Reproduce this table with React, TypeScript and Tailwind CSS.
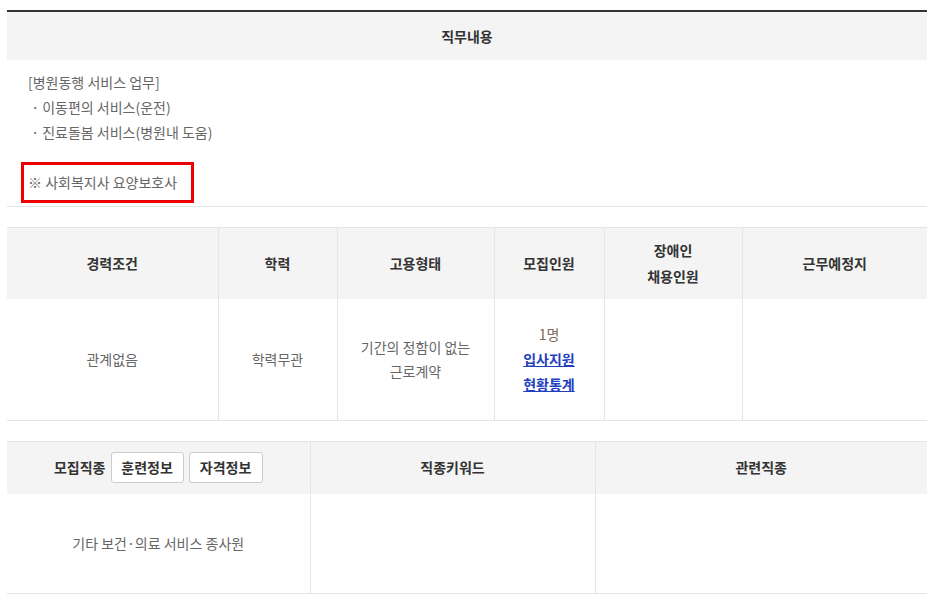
import React from "react";

const font = { fontFamily: '"Noto Sans CJK KR", "Noto Sans", sans-serif' };

export default function App() {
  return (
    <div className="bg-white w-[933px] h-[613px] pt-[10px] px-[7px] text-[14px]" style={font}>
      {/* 직무내용 */}
      <section className="w-[920px] border-t-2 border-[#333333] border-b border-b-[#e5e5e5]">
        <div className="h-[48px] bg-[#f4f4f4] flex items-center justify-center font-bold text-[#333333]">직무내용</div>
        <div className="pt-[10px] pb-[3px] text-[#666666] leading-[25px]">
          <p className="pl-[21px]">[병원동행 서비스 업무]</p>
          <p className="pl-[21px]">&nbsp;· 이동편의 서비스(운전)</p>
          <p className="pl-[21px]">&nbsp;· 진료돌봄 서비스(병원내 도움)</p>
          <div className="ml-[14px] mt-[17px] w-[173px] h-[41px] border-[3px] border-[#ee0000] flex items-center pl-[4px]">
            ※ 사회복지사 요양보호사
          </div>
        </div>
      </section>

      {/* 조건 표 */}
      <table className="mt-[20px] w-[920px] border-collapse table-fixed border-t border-b border-[#e5e5e5]">
        <colgroup>
          <col className="w-[211px]" />
          <col className="w-[119px]" />
          <col className="w-[157px]" />
          <col className="w-[110px]" />
          <col className="w-[138px]" />
          <col className="w-[185px]" />
        </colgroup>
        <thead>
          <tr className="h-[71px] bg-[#f4f4f4] text-[#333333] font-bold leading-[26px]">
            <th className="border-r border-[#e5e5e5]">경력조건</th>
            <th className="border-r border-[#e5e5e5]">학력</th>
            <th className="border-r border-[#e5e5e5]">고용형태</th>
            <th className="border-r border-[#e5e5e5]">모집인원</th>
            <th className="border-r border-[#e5e5e5]">장애인<br />채용인원</th>
            <th>근무예정지</th>
          </tr>
        </thead>
        <tbody>
          <tr className="h-[122px] text-[#666666] text-center leading-[24px]">
            <td className="border-r border-[#e5e5e5]">관계없음</td>
            <td className="border-r border-[#e5e5e5]">학력무관</td>
            <td className="border-r border-[#e5e5e5]">기간의 정함이 없는<br />근로계약</td>
            <td className="border-r border-[#e5e5e5] leading-[25px]">
              <div className="text-[#7d6a55]">1명</div>
              <div><a className="text-[#1f3fbf] underline font-bold">입사지원</a></div>
              <div><a className="text-[#1f3fbf] underline font-bold">현황통계</a></div>
            </td>
            <td className="border-r border-[#e5e5e5]"></td>
            <td></td>
          </tr>
        </tbody>
      </table>

      {/* 직종 표 */}
      <table className="mt-[20px] w-[920px] border-collapse table-fixed border-t border-b border-[#e5e5e5]">
        <colgroup>
          <col className="w-[303px]" />
          <col className="w-[285px]" />
          <col className="w-[332px]" />
        </colgroup>
        <thead>
          <tr className="h-[52px] bg-[#f4f4f4] text-[#333333] font-bold">
            <th className="border-r border-[#e5e5e5]">
              <div className="flex items-center justify-center gap-[5px]">
                <span>모집직종</span>
                <span className="w-[73px] h-[31px] bg-white border border-[#cccccc] rounded-[3px] flex items-center justify-center font-bold">훈련정보</span>
                <span className="w-[74px] h-[31px] bg-white border border-[#cccccc] rounded-[3px] flex items-center justify-center font-bold">자격정보</span>
              </div>
            </th>
            <th className="border-r border-[#e5e5e5]">직종키워드</th>
            <th>관련직종</th>
          </tr>
        </thead>
        <tbody>
          <tr className="h-[100px] text-[#666666] text-center">
            <td className="border-r border-[#e5e5e5]">기타 보건·의료 서비스 종사원</td>
            <td className="border-r border-[#e5e5e5]"></td>
            <td></td>
          </tr>
        </tbody>
      </table>
    </div>
  );
}
